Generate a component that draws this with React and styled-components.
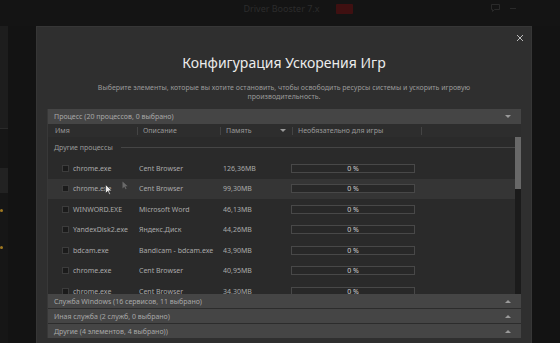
import React from "react";
import styled, { createGlobalStyle } from "styled-components";

const Global = createGlobalStyle`
  html, body { margin: 0; padding: 0; background: #131313; overflow: hidden; }
  body { font-family: "Noto Sans", "Open Sans", sans-serif; }
  * { box-sizing: border-box; }
`;

const Screen = styled.div`
  position: relative;
  width: 560px;
  height: 343px;
  background: #131313;
  display: flex;
  flex-direction: column;
  overflow: hidden;
`;

const TopBar = styled.div`
  height: 26px;
  display: flex;
  align-items: flex-start;
  justify-content: center;
  padding-top: 2px;
  position: relative;
  background: #141414;
`;

const AppTitle = styled.div`
  display: flex;
  align-items: center;
  gap: 16px;
  color: #2c2c2c;
  font-size: 9px;
  line-height: 14px;
  margin-left: 36px;
`;

const Badge = styled.span`
  width: 17px;
  height: 10px;
  background: #3f1011;
  border-radius: 1px;
`;

const WinIcons = styled.div`
  position: absolute;
  right: 44px;
  top: 4px;
  display: flex;
  gap: 10px;
  align-items: center;
`;

const Body = styled.div`
  flex: 1;
  display: flex;
`;

const SideStrip = styled.div`
  width: 8px;
  display: flex;
  flex-direction: column;
  background: #1b1b1b;
`;

const StripBlock = styled.div`
  height: ${(p) => p.$h}px;
  background: ${(p) => p.$bg};
  border-top: ${(p) => (p.$line ? "1px solid #2a2a2a" : "none")};
  position: relative;
`;

const Dot = styled.span`
  position: absolute;
  left: 0;
  top: ${(p) => p.$top}px;
  width: 3px;
  height: 3px;
  border-radius: 50%;
  background: #a07820;
`;

const Modal = styled.div`
  position: absolute;
  left: 36px;
  top: 26px;
  width: 496px;
  height: 330px;
  background: #2f2f2f;
  border: 1px solid #363636;
  padding: 0 10px;
  display: flex;
  flex-direction: column;
`;

const Close = styled.button`
  position: absolute;
  right: 6px;
  top: 6px;
  width: 10px;
  height: 10px;
  padding: 0;
  border: none;
  background: transparent;
  display: flex;
  align-items: center;
  justify-content: center;
`;

const Title = styled.h1`
  margin: 26px 0 0;
  text-align: center;
  font-weight: 400;
  font-size: 14px;
  line-height: 20px;
  color: #ececec;
`;

const Subtitle = styled.p`
  margin: 9.5px auto 0;
  width: 380px;
  text-align: center;
  font-size: 7px;
  line-height: 9px;
  color: #9a9a9a;
`;

const Panel = styled.div`
  margin-top: 8.5px;
  display: flex;
  flex-direction: column;
  background: #2a2a2a;
  border-left: 1px solid #383838;
`;

const SectionHeader = styled.div`
  height: ${(p) => p.$h || 15}px;
  background: #454545;
  display: flex;
  align-items: center;
  justify-content: space-between;
  padding: 0 10px 0 6px;
  font-size: 7px;
  color: #a8a8a8;
  border-bottom: ${(p) => (p.$sep ? "1px solid #2c2c2c" : "none")};
`;

const Caret = styled.span`
  width: 0;
  height: 0;
  border-left: 3px solid transparent;
  border-right: 3px solid transparent;
  ${(p) =>
    p.$up
      ? "border-bottom: 3px solid #9a9a9a;"
      : "border-top: 3px solid #9a9a9a;"}
`;

const ColHeader = styled.div`
  height: 13px;
  display: grid;
  grid-template-columns: 90px 83px 72px 129px 1fr;
  align-items: center;
  background: #2d2d2d;
  font-size: 7px;
  color: #9a9a9a;
`;

const ColCell = styled.div`
  position: relative;
  display: flex;
  align-items: center;
  justify-content: space-between;
  padding-left: ${(p) => p.$pl || 5}px;
  padding-right: 7px;
  height: 100%;
  &::after {
    content: ${(p) => (p.$noSep ? "none" : "''")};
    position: absolute;
    right: 0;
    top: 3px;
    height: 8px;
    width: 1px;
    background: #444;
  }
`;

const ScrollArea = styled.div`
  height: 157px;
  display: flex;
  overflow: hidden;
`;

const List = styled.div`
  flex: 1;
  overflow: hidden;
`;

const GroupRow = styled.div`
  height: 21px;
  display: flex;
  align-items: center;
  gap: 8px;
  padding-left: 6px;
  font-size: 7px;
  color: #9a9a9a;
  &::after {
    content: "";
    flex: 1;
    height: 1px;
    background: #454545;
  }
`;

const Row = styled.div`
  height: 20.5px;
  display: grid;
  grid-template-columns: 7px 70px 84px 68px 124px;
  align-items: center;
  padding-left: 14px;
  font-size: 7px;
  color: #a9a9a9;
  background: ${(p) => (p.$hover ? "#353535" : "transparent")};
  & > :nth-child(2) { padding-left: 4px; }
`;

const Check = styled.span`
  width: 7px;
  height: 7px;
  background: #1b1b1b;
  border: 1px solid #3c3c3c;
`;

const Cell = styled.span`
  white-space: nowrap;
  overflow: hidden;
`;

const Bar = styled.div`
  height: 9px;
  border: 1px solid #484848;
  background: #282828;
  display: flex;
  align-items: center;
  justify-content: center;
  font-size: 7px;
  color: #cfcfcf;
`;

const Scrollbar = styled.div`
  width: 6px;
  background: #1b1b1b;
  display: flex;
  flex-direction: column;
`;

const Thumb = styled.div`
  height: 52px;
  background: #686868;
`;

const Cursor = styled.svg`
  position: absolute;
  left: ${(p) => p.$x}px;
  top: ${(p) => p.$y}px;
`;

const rows = [
  ["chrome.exe", "Cent Browser", "126,36MB"],
  ["chrome.exe", "Cent Browser", "99,30MB"],
  ["WINWORD.EXE", "Microsoft Word", "46,13MB"],
  ["YandexDisk2.exe", "Яндекс.Диск", "44,26MB"],
  ["bdcam.exe", "Bandicam - bdcam.exe", "43,90MB"],
  ["chrome.exe", "Cent Browser", "40,95MB"],
  ["chrome.exe", "Cent Browser", "34,30MB"],
];

export default function App() {
  return (
    <>
      <Global />
      <Screen>
        <TopBar>
          <AppTitle>
            Driver Booster 7.x
            <Badge />
          </AppTitle>
          <WinIcons>
            <svg width="9" height="8" viewBox="0 0 9 8">
              <path d="M0.5 0.5h8v5h-5l-2 2v-2h-1z" fill="none" stroke="#2a2a2a" />
            </svg>
            <svg width="6" height="3" viewBox="0 0 6 3">
              <rect x="0" y="1" width="6" height="1" fill="#2a2a2a" />
            </svg>
          </WinIcons>
        </TopBar>
        <Body>
          <SideStrip>
            <StripBlock $h={102} $bg="#1d1d1d" />
            <StripBlock $h={40} $bg="#161616" $line />
            <StripBlock $h={25} $bg="#222222" />
            <StripBlock $h={150} $bg="#161616">
              <Dot $top={16} />
              <Dot $top={53} />
            </StripBlock>
          </SideStrip>
        </Body>

        <Modal>
          <Close aria-label="close">
            <svg width="8" height="8" viewBox="0 0 8 8">
              <path d="M1 1L7 7M7 1L1 7" stroke="#bdbdbd" strokeWidth="1" />
            </svg>
          </Close>
          <Title>Конфигурация Ускорения Игр</Title>
          <Subtitle>
            Выберите элементы, которые вы хотите остановить, чтобы освободить
            ресурсы системы и ускорить игровую производительность.
          </Subtitle>
          <Panel>
            <SectionHeader>
              <span>Процесс (20 процессов, 0 выбрано)</span>
              <Caret />
            </SectionHeader>
            <ColHeader>
              <ColCell $pl={7}>Имя</ColCell>
              <ColCell>Описание</ColCell>
              <ColCell>
                Память
                <Caret />
              </ColCell>
              <ColCell>Необязательно для игры</ColCell>
              <ColCell $noSep />
            </ColHeader>
            <ScrollArea>
              <List>
                <GroupRow>Другие процессы</GroupRow>
                {rows.map((r, i) => (
                  <Row key={i} $hover={i === 1}>
                    <Check />
                    <Cell>{r[0]}</Cell>
                    <Cell>{r[1]}</Cell>
                    <Cell>{r[2]}</Cell>
                    <Bar>0 %</Bar>
                  </Row>
                ))}
              </List>
              <Scrollbar>
                <Thumb />
              </Scrollbar>
            </ScrollArea>
            <SectionHeader $h={15} $sep>
              <span>Служба Windows (16 сервисов, 11 выбрано)</span>
              <Caret $up />
            </SectionHeader>
            <SectionHeader $h={15} $sep>
              <span>Иная служба (2 служб, 0 выбрано)</span>
              <Caret $up />
            </SectionHeader>
            <SectionHeader $h={14}>
              <span>Другие (4 элементов, 4 выбрано))</span>
              <Caret $up />
            </SectionHeader>
          </Panel>
        </Modal>

        <Cursor $x={105} $y={184} width="7" height="11" viewBox="0 0 7 11">
          <path d="M0.5 0.5v9l2.2-2.2 1.6 3.2 1.2-0.6-1.6-3.1h3z" fill="#e8e8e8" stroke="#222" strokeWidth="0.6" />
        </Cursor>
        <Cursor $x={122} $y={181} width="6" height="9" viewBox="0 0 6 9">
          <path d="M0.5 0.5v7l1.8-1.8 1.3 2.6 1-0.5-1.3-2.5h2.4z" fill="#6a6a6a" />
        </Cursor>
      </Screen>
    </>
  );
}
